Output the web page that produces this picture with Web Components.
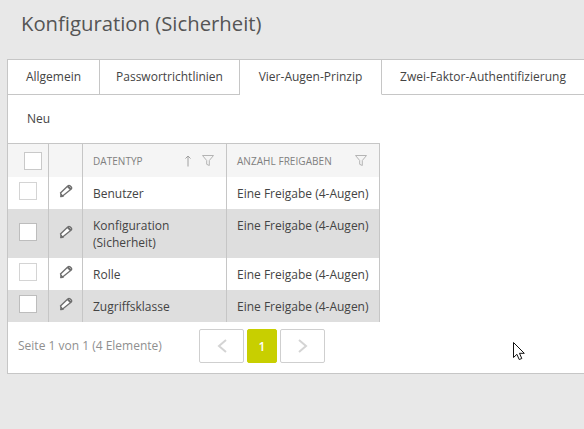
<!DOCTYPE html>
<html lang="de">
<head>
<meta charset="utf-8">
<title>Konfiguration (Sicherheit)</title>
<style>
  html, body{ margin: 0; height: 100%; overflow: hidden; }
  body{
    background: #e8e8e8;
    color: #444;
    font-family: "Open Sans", "Noto Sans", sans-serif;
    font-size: 12px;
    width: 584px;
    height: 429px;
  }
</style>
</head>
<body>
<template id="config-page">
  <style>
    :host{ display: block; padding: 0 0 0 7px; position: relative; height: 429px; box-sizing: border-box; overflow: hidden; }
    h1{ font-size: 20.3px; font-weight: 400; color: #555; margin: 0; padding: 10px 0 0 14px; height: 59px; box-sizing: border-box; line-height: 27px; }
    .panel{ background: #fff; border: 1px solid #c6c6c6; border-right: 0; height: 315px; box-sizing: border-box; margin-right: -4px; }
    .toolbar{ height: 48px; display: flex; align-items: center; padding: 0 0 2px 19px; box-sizing: border-box; color: #444; font-size: 12px; }
    .cursor{ position: absolute; left: 513px; top: 342px; }
  </style>
  <h1><slot name="title"></slot></h1>
  <div class="panel">
    <slot name="tabs"></slot>
    <div class="toolbar"><slot name="toolbar"></slot></div>
    <slot></slot>
  </div>
  <svg class="cursor" width="14" height="20" viewBox="0 0 14 20"><path d="M.5.5v15l3.400-3.200 2.300 5.200 2.600-1-2.300-5.200h4.800z" fill="#fff" stroke="#111"/></svg>
</template>

<template id="tab-bar">
  <style>
    :host{ display: flex; height: 35px; box-sizing: border-box; }
    .rest{ flex: 1; border-bottom: 1px solid #c6c6c6; }
  </style>
  <slot></slot>
  <div class="rest"></div>
</template>

<template id="tab-item">
  <style>
    :host{ display: flex; align-items: center; justify-content: center; box-sizing: border-box; height: 35px; padding-bottom: 2px; border-right: 1px solid #c6c6c6; border-bottom: 1px solid #c6c6c6; color: #444; font-size: 12px; white-space: nowrap; }
    :host([active]){ border-bottom-color: transparent; }
  </style>
  <slot></slot>
</template>

<template id="data-grid">
  <style>
    :host{ display: block; width: 372px; }
    .head{ display: grid; grid-template-columns: 41px 34px 144px 152px; height: 34px; background: #f5f5f5; border-top: 1px solid #c6c6c6; border-right: 1px solid #c6c6c6; box-sizing: border-box; }
    .head > div{ display: flex; align-items: center; border-right: 1px solid #c6c6c6; box-sizing: border-box; font-size: 10px; color: #808080; }
    .head > div:last-child{ border-right: 0; }
    .box{ width: 18px; height: 18px; border: 1px solid #c9c9c9; background: #fff; box-sizing: border-box; margin-left: 16px; }
    .label{ flex: 1; padding-left: 10px; letter-spacing: .05px; }
    svg{ flex: none; }
  </style>
  <div class="head">
    <div><span class="box"></span></div>
    <div></div>
    <div><span class="label">DATENTYP</span>
      <svg style="margin-right:10px" width="8" height="12" viewBox="0 0 8 12"><path d="M4 11.500V1M1.500 3.500L4 1l2.500 2.500" fill="none" stroke="#a0a0a0"/></svg>
      <svg style="margin-right:12px" width="12" height="11" viewBox="0 0 12 11"><path d="M.5.5h11L7.300 5.500v5l-2.600-1.200V5.500z" fill="none" stroke="#b4b4b4"/></svg>
    </div>
    <div><span class="label">ANZAHL FREIGABEN</span>
      <svg style="margin-right:12px" width="12" height="11" viewBox="0 0 12 11"><path d="M.5.5h11L7.300 5.500v5l-2.600-1.200V5.500z" fill="none" stroke="#b4b4b4"/></svg>
    </div>
  </div>
  <slot></slot>
</template>

<template id="grid-row">
  <style>
    :host{ display: grid; grid-template-columns: 41px 34px 144px 152px; min-height: 32px; background: #fff; border-right: 1px solid #c6c6c6; color: #444; font-size: 12px; line-height: 17px; box-sizing: border-box; }
    :host([alt]){ background: #dedede; }
    .c{ border-right: 1px solid #c6c6c6; box-sizing: border-box; display: flex; }
    .c:last-child{ border-right: 0; }
    .sel, .edit{ align-items: center; }
    .sel span{ display: block; width: 18px; height: 18px; margin-left: 11px; background: #fff; border: 1px solid #d4d4d4; box-sizing: border-box; margin-top: -4px; }
    :host([alt]) .sel span{ border-color: #bdbdbd; }
    .edit{ justify-content: center; padding-bottom: 4px; }
    .txt{ padding: 8px 8px 0 10px; }
    .txt div{ white-space: pre-line; }
  </style>
  <div class="c sel"><span></span></div>
  <div class="c edit">
    <svg width="14" height="14" viewBox="0 0 14 14"><path d="M3 12.500L1.500 9 9 1.700a1.400 1.400 0 0 1 2 0l1.300 1.300a1.400 1.400 0 0 1 0 2z" fill="#fff" stroke="#6e6e6e" stroke-width="1.300"/><path d="M1 13.300l.6-4.300 3.600 3.600zM8 3l3 3 1.500-1.500-3-3z" fill="#6e6e6e"/></svg>
  </div>
  <div class="c txt"><div><slot name="type"></slot></div></div>
  <div class="c txt"><div><slot name="count"></slot></div></div>
</template>

<template id="grid-pager">
  <style>
    :host{ display: flex; align-items: center; width: 372px; height: 51px; box-sizing: border-box; padding: 0 0 3px 10px; }
    .info{ width: 181px; color: #8f8f8f; font-size: 12px; padding-bottom: 1px; }
    button{ font: inherit; height: 34px; box-sizing: border-box; border-radius: 2px; padding: 0; display: flex; align-items: center; justify-content: center; background: #fff; border: 1px solid #cfcfcf; }
    .nav{ width: 45px; }
    .cur{ width: 30px; background: #c8cf00; border-color: #c8cf00; color: #fff; font-weight: 600; font-size: 12px; margin: 0 3px; }
  </style>
  <span class="info"><slot></slot></span>
  <button class="nav"><svg width="12" height="16" viewBox="0 0 12 16"><path d="M10 2L3 8l7 6" fill="none" stroke="#d4d4d4" stroke-width="2"/></svg></button>
  <button class="cur">1</button>
  <button class="nav"><svg width="12" height="16" viewBox="0 0 12 16"><path d="M2 2l7 6-7 6" fill="none" stroke="#d4d4d4" stroke-width="2"/></svg></button>
</template>

<config-page>
  <span slot="title">Konfiguration (Sicherheit)</span>
  <tab-bar slot="tabs">
    <tab-item style="width:92px">Allgemein</tab-item>
    <tab-item style="width:140px">Passwortrichtlinien</tab-item>
    <tab-item style="width:142px" active>Vier-Augen-Prinzip</tab-item>
    <tab-item style="width:202px;border-right:0">Zwei-Faktor-Authentifizierung</tab-item>
  </tab-bar>
  <span slot="toolbar">Neu</span>
  <data-grid>
    <grid-row><span slot="type">Benutzer</span><span slot="count">Eine Freigabe (4-Augen)</span></grid-row>
    <grid-row alt style="min-height:49px"><span slot="type">Konfiguration
(Sicherheit)</span><span slot="count">Eine Freigabe (4-Augen)</span></grid-row>
    <grid-row><span slot="type">Rolle</span><span slot="count">Eine Freigabe (4-Augen)</span></grid-row>
    <grid-row alt><span slot="type">Zugriffsklasse</span><span slot="count">Eine Freigabe (4-Augen)</span></grid-row>
  </data-grid>
  <grid-pager>Seite 1 von 1 (4 Elemente)</grid-pager>
</config-page>

<script>
  // every element just clones its own template into an open shadow root
  class TemplateElement extends HTMLElement{
    constructor(){
      super()
      const elNode = document.querySelector( '#' + this.localName )
        .content.cloneNode(true)
      this.attachShadow({mode:'open'}).appendChild( elNode )
    }
  }
  const names = ['config-page','tab-bar','tab-item','data-grid','grid-row','grid-pager']
  names.forEach( name => customElements.define( name, class extends TemplateElement{} ) )
</script>
</body>
</html>
